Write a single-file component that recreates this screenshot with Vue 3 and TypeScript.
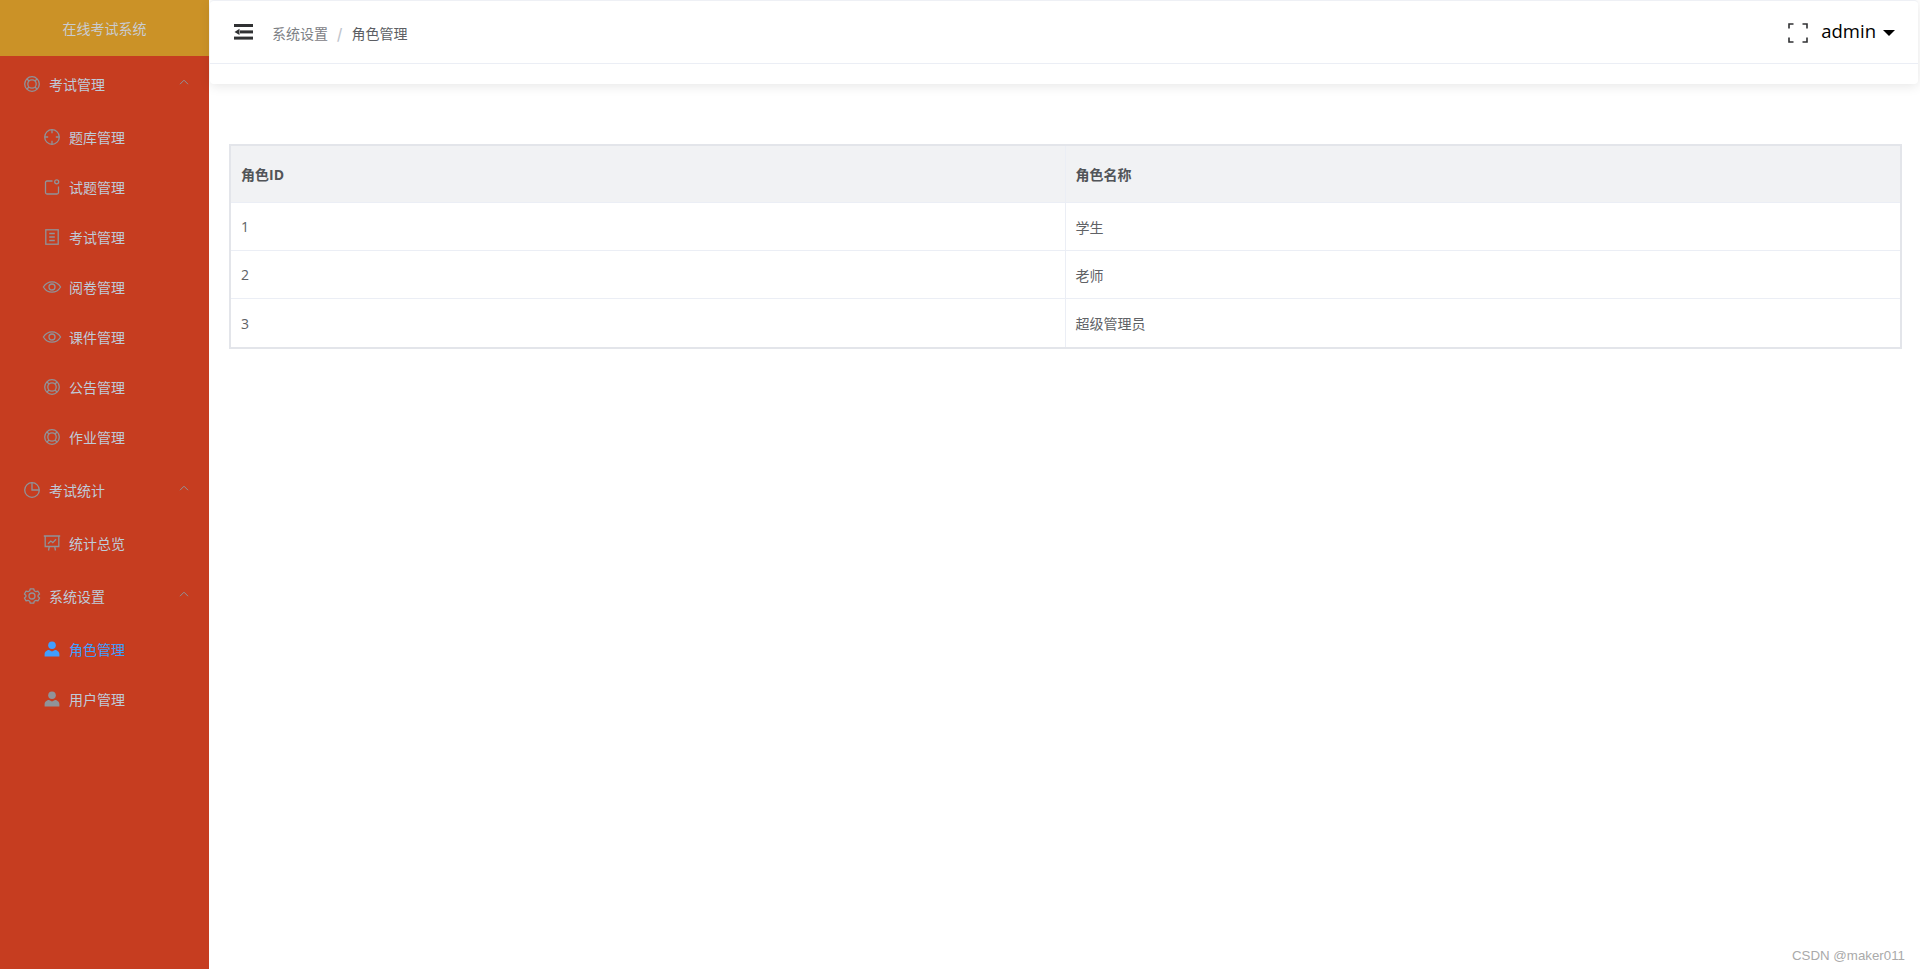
<template>
  <div class="layout">
    <aside class="sidebar">
      <div class="logo">在线考试系统</div>
      <div v-for="group in menu" :key="group.title" class="group">
        <div class="group-title">
          <svg class="icon" viewBox="0 0 16 16"><use :href="'#' + group.icon" /></svg>
          <span class="label">{{ group.title }}</span>
          <svg class="arrow" viewBox="0 0 10 6"><path d="M1 5.2 5 1.2 9 5.2" /></svg>
        </div>
        <div
          v-for="item in group.items"
          :key="item.title"
          class="menu-item"
          :class="{ active: item.title === activeItem }"
        >
          <svg class="icon" :class="{ solid: item.icon === 'i-user' }" viewBox="0 0 16 16">
            <use :href="'#' + item.icon" />
          </svg>
          <span class="label">{{ item.title }}</span>
        </div>
      </div>
    </aside>

    <main class="main">
      <header class="navbar">
        <div class="navbar-top">
          <svg class="hamburger" viewBox="0 0 19 16">
            <rect x="0" y="0" width="19" height="3" />
            <rect x="6" y="6.4" width="13" height="3" />
            <rect x="0" y="12.6" width="19" height="3" />
            <path d="M.5 7.9 5.5 4.8V11Z" />
          </svg>
          <div class="breadcrumb">
            <span class="crumb">系统设置</span>
            <span class="sep">/</span>
            <span class="crumb current">角色管理</span>
          </div>
          <div class="right-menu">
            <svg class="fullscreen" viewBox="0 0 20 20">
              <path d="M5.5 1H1V5.5M14.5 1H19V5.5M1 14.5V19H5.5M19 14.5V19H14.5" />
            </svg>
            <span class="username">admin</span>
            <span class="caret"></span>
          </div>
        </div>
      </header>

      <div class="content">
        <table class="role-table">
          <thead>
            <tr>
              <th>角色ID</th>
              <th>角色名称</th>
            </tr>
          </thead>
          <tbody>
            <tr v-for="role in roles" :key="role.id">
              <td>{{ role.id }}</td>
              <td>{{ role.name }}</td>
            </tr>
          </tbody>
        </table>
      </div>
    </main>

    <div class="watermark">CSDN @maker011</div>

    <svg class="defs" width="0" height="0">
      <defs>
        <g id="i-help">
          <circle cx="8" cy="8" r="7.3" />
          <circle cx="8" cy="8" r="4.2" />
          <path d="M3 3 5 5M13 3 11 5M3 13 5 11M13 13 11 11" />
        </g>
        <g id="i-aim">
          <circle cx="8" cy="8" r="7.3" />
          <path d="M8 .8V4.2M8 11.8V15.2M.8 8H4.2M11.8 8H15.2" />
        </g>
        <g id="i-note">
          <path d="M8.5 2H3A1.5 1.5 0 0 0 1.5 3.5V13.5A1.5 1.5 0 0 0 3 15H13A1.5 1.5 0 0 0 14.5 13.5V7.5" />
          <circle cx="12.7" cy="2.8" r="2" />
        </g>
        <g id="i-doc">
          <rect x="1.8" y=".8" width="12.4" height="14.4" />
          <path d="M5.2 4.5H10.8M5.2 8H10.8M5.2 11.5H10.8" />
        </g>
        <g id="i-eye">
          <path d="M-.6 8C1.6 4.4 4.6 2.8 8 2.8S14.4 4.4 16.6 8C14.4 11.6 11.4 13.2 8 13.2S1.6 11.6 -.6 8Z" />
          <circle cx="8" cy="8" r="3" />
        </g>
        <g id="i-pie">
          <circle cx="8" cy="8" r="7.3" />
          <path d="M8 .8V8H15.2" />
        </g>
        <g id="i-board">
          <path d="M-.2 1H16.2M1.2 1V11.5H14.8V1M4.5 15.5 5.3 11.5M11.5 15.5 10.7 11.5M4 8.8 6.8 6 8.8 7.6 12 4.2" />
        </g>
        <g id="i-gear">
          <path d="M6.3.8H9.7L10.3 2.8 11.9 3.7 13.9 3.1 15.6 6 14.1 7.2V8.8L15.6 10 13.9 12.9 11.9 12.3 10.3 13.2 9.7 15.2H6.3L5.7 13.2 4.1 12.3 2.1 12.9.4 10 1.9 8.8V7.2L.4 6 2.1 3.1 4.1 3.7 5.7 2.8Z" stroke-linejoin="round" />
          <circle cx="8" cy="8" r="3" />
        </g>
        <g id="i-user">
          <circle cx="8" cy="4.2" r="3.8" />
          <path d="M.6 15.6V13.4C.6 10.6 3 9 5 9L8 10.6 11 9C13 9 15.4 10.6 15.4 13.4V15.6Z" />
        </g>
      </defs>
    </svg>
  </div>
</template>

<script setup lang="ts">
interface MenuItem {
  title: string;
  icon: string;
}

interface MenuGroup extends MenuItem {
  items: MenuItem[];
}

const activeItem = '角色管理';

const menu: MenuGroup[] = [
  {
    title: '考试管理',
    icon: 'i-help',
    items: [
      { title: '题库管理', icon: 'i-aim' },
      { title: '试题管理', icon: 'i-note' },
      { title: '考试管理', icon: 'i-doc' },
      { title: '阅卷管理', icon: 'i-eye' },
      { title: '课件管理', icon: 'i-eye' },
      { title: '公告管理', icon: 'i-help' },
      { title: '作业管理', icon: 'i-help' }
    ]
  },
  {
    title: '考试统计',
    icon: 'i-pie',
    items: [{ title: '统计总览', icon: 'i-board' }]
  },
  {
    title: '系统设置',
    icon: 'i-gear',
    items: [
      { title: '角色管理', icon: 'i-user' },
      { title: '用户管理', icon: 'i-user' }
    ]
  }
];

const roles = [
  { id: 1, name: '学生' },
  { id: 2, name: '老师' },
  { id: 3, name: '超级管理员' }
];
</script>

<style>
html,
body {
  margin: 0;
  background: #fff;
}
</style>

<style scoped>
.layout {
  display: flex;
  height: 969px;
  overflow: hidden;
  font-family: "Noto Sans CJK SC", "Noto Sans", sans-serif;
  position: relative;
}

.defs {
  position: absolute;
}

.sidebar {
  width: 209px;
  flex: none;
  background: #c63d20;
  color: #bfcbd9;
  font-size: 14px;
}

.logo {
  height: 56px;
  line-height: 56px;
  text-align: center;
  background: #cb9227;
  color: #c9ccd2;
}

.group-title,
.menu-item {
  display: flex;
  align-items: center;
}

.group-title {
  height: 56px;
  padding: 0 20px 0 24px;
}

.menu-item {
  height: 50px;
  padding-left: 44px;
}

.group-title .label {
  margin-top: -1px;
}

.icon {
  width: 16px;
  height: 16px;
  flex: none;
  margin-right: 9px;
  fill: none;
  stroke: #909399;
  stroke-width: 1.3;
  overflow: visible;
}

.icon.solid {
  fill: #909399;
  stroke: none;
}

.label {
  flex: 1;
  line-height: 20px;
}

.arrow {
  width: 10px;
  height: 6px;
  margin-top: -5px;
  fill: none;
  stroke: #909399;
  stroke-width: 1;
}

.menu-item.active {
  color: #409eff;
}

.menu-item.active .icon {
  fill: #409eff;
}

.main {
  flex: 1;
  min-width: 0;
  padding-left: 1px;
}

.navbar {
  width: 1708px;
  height: 84px;
  background: #fff;
  border-radius: 4px;
  border-top: 1px solid #eef0f5;
  box-sizing: border-box;
  box-shadow: 0 2px 12px rgba(0, 0, 0, 0.1);
}

.navbar-top {
  display: flex;
  align-items: center;
  height: 62px;
  padding: 0 23px 0 24px;
  border-bottom: 1px solid #ebeef5;
}

.hamburger {
  width: 19px;
  height: 16px;
  fill: #303133;
}

.breadcrumb {
  margin-left: 19px;
  margin-top: 2px;
  font-size: 14px;
}

.crumb {
  color: #7d8085;
}

.crumb.current {
  color: #5c5e63;
}

.sep {
  margin: 0 9px;
  color: #c0c4cc;
  font-weight: 700;
}

.right-menu {
  display: flex;
  align-items: center;
  margin-left: auto;
}

.fullscreen {
  width: 20px;
  height: 20px;
  fill: none;
  stroke: #303133;
  stroke-width: 1.6;
  margin-top: 1px;
}

.username {
  margin-left: 13px;
  font-size: 18.5px;
  color: #000;
  font-family: "Open Sans", sans-serif;
  line-height: 24px;
  margin-top: -2px;
}

.caret {
  width: 0;
  height: 0;
  margin-left: 7px;
  margin-top: 1px;
  border-top: 6px solid #000;
  border-left: 6px solid transparent;
  border-right: 6px solid transparent;
}

.content {
  padding: 60px 18px 0 19px;
}

.role-table {
  width: 1673px;
  table-layout: fixed;
  border-collapse: separate;
  border-spacing: 0;
  border: 2px solid #e3e5ea;
  font-family: "Open Sans", "Noto Sans CJK SC", sans-serif;
  font-size: 14px;
  color: #606266;
  box-sizing: border-box;
}

.role-table th,
.role-table td {
  box-sizing: border-box;
  padding: 0 10px;
  text-align: left;
  border-bottom: 1px solid #ebeef5;
  border-right: 1px solid #ebeef5;
}

.role-table th:last-child,
.role-table td:last-child {
  border-right: none;
}

.role-table tbody tr:last-child td {
  border-bottom: none;
}

.role-table th {
  height: 57px;
  background: #f1f2f4;
  color: #515458;
  font-weight: 700;
}

.role-table td {
  height: 48px;
  background: #fff;
}

.watermark {
  position: absolute;
  right: 15px;
  bottom: 6px;
  font-family: "Liberation Sans", sans-serif;
  font-size: 13.3px;
  color: #aaa;
}
</style>
